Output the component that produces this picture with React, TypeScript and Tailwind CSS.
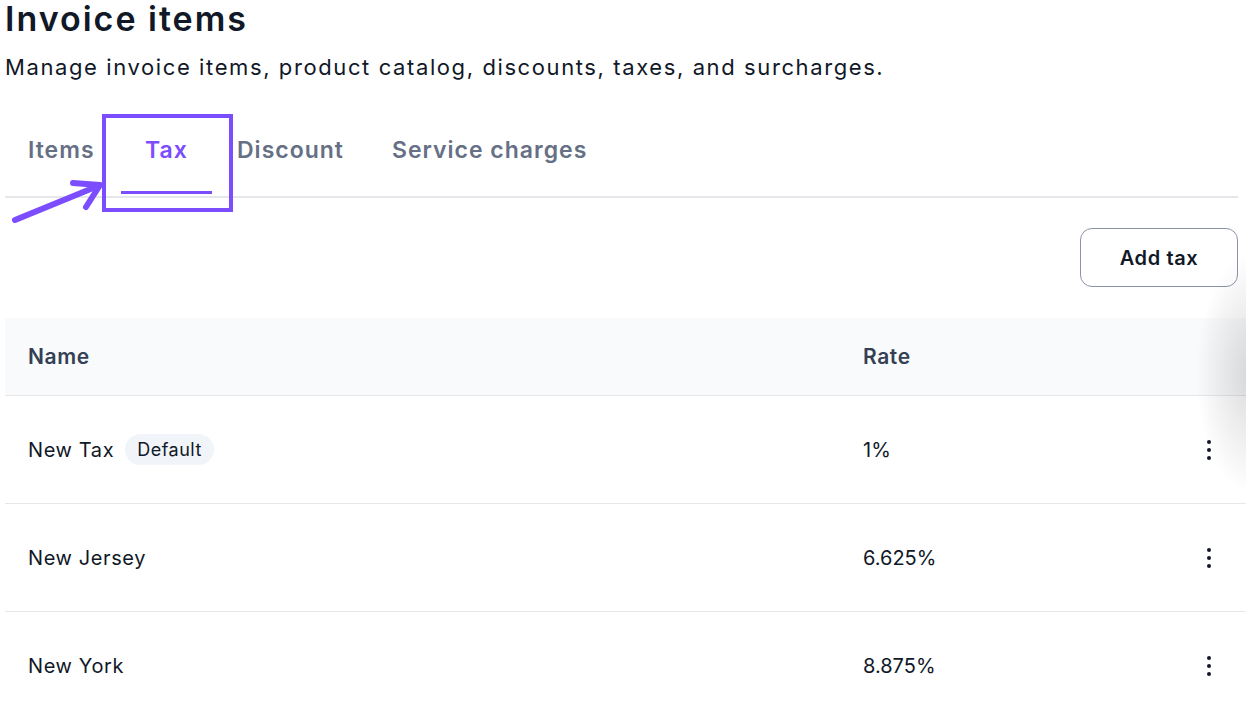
import React from 'react';

const rows = [
  { name: 'New Tax', rate: '1%', isDefault: true },
  { name: 'New Jersey', rate: '6.625%' },
  { name: 'New York', rate: '8.875%' },
];

function Dots() {
  return (
    <svg width="6" height="22" viewBox="0 0 6 22" className="text-gray-900">
      <circle cx="3" cy="3" r="2" fill="currentColor" />
      <circle cx="3" cy="11" r="2" fill="currentColor" />
      <circle cx="3" cy="19" r="2" fill="currentColor" />
    </svg>
  );
}

export default function App() {
  return (
    <div className="relative h-[707px] w-[1246px] overflow-hidden bg-white pl-[5px] pr-[8px] font-['Inter',sans-serif] text-[#1f2937]">
      {/* shadow from an overlay off to the right */}
      <div className="pointer-events-none absolute right-[-60px] top-[254px] h-[240px] w-[110px] rounded-full bg-[radial-gradient(closest-side,rgba(0,0,0,0.14),rgba(0,0,0,0))]" />

      <h1 className="mt-[-3px] text-[34px] font-semibold leading-[44px] tracking-[2px] text-[#111827]">Invoice items</h1>
      <p className="mt-[10px] text-[22px] leading-[32px] tracking-[1.6px] text-[#111827]">
        Manage invoice items, product catalog, discounts, taxes, and surcharges.
      </p>

      {/* tabs */}
      <div className="relative mt-[34px] flex h-[81px] border-b-2 border-[#e5e7eb]">
        <div className="flex items-start pt-[15px] text-[23px] font-semibold leading-[36px] tracking-[1px]">
          <span className="w-[116px] pl-[23px] text-[#667085]">Items</span>
          <span className="relative w-[91px] text-center text-[#7c4dff]">
            Tax
            <span className="absolute left-0 top-[59px] h-[3px] w-[91px] bg-[#7c4dff]" />
          </span>
          <span className="ml-[25px] w-[155px] text-[#667085]">Discount</span>
          <span className="text-[#667085]">Service charges</span>
        </div>
        {/* annotation */}
        <div className="pointer-events-none absolute left-[97px] top-[-3px] h-[98px] w-[131px] border-4 border-[#7c4dff]" />
        <svg className="pointer-events-none absolute left-[-5px] top-[52px]" width="110" height="56" viewBox="0 0 110 56">
          <path d="M15 51 L98 17" stroke="#7c4dff" strokeWidth="6" strokeLinecap="round" fill="none" />
          <path d="M73 14 L100 16 L86 38" stroke="#7c4dff" strokeWidth="6" strokeLinecap="round" strokeLinejoin="round" fill="none" />
        </svg>
      </div>

      <div className="mt-[30px] flex justify-end">
        <button className="h-[59px] w-[158px] rounded-[12px] border border-[#8b93a7] bg-white text-[20px] font-semibold tracking-[0.6px] text-[#111827]">
          Add tax
        </button>
      </div>

      {/* table */}
      <div className="mt-[31px] mr-[-8px]">
        <div className="flex h-[78px] items-center border-b border-[#e5e7eb] bg-[#f9fafb] text-[21px] font-semibold tracking-[0.6px] text-[#344054]">
          <span className="w-[858px] pl-[23px]">Name</span>
          <span>Rate</span>
        </div>
        {rows.map((r) => (
          <div key={r.name} className="flex h-[108px] items-center border-b border-[#e5e7eb] text-[20px] text-[#111827]">
            <div className="flex w-[858px] items-center gap-[11px] pl-[23px]">
              <span className="tracking-[0.6px]">{r.name}</span>
              {r.isDefault && (
                <span className="rounded-full bg-[#f1f5f9] px-[12px] py-[3px] text-[18px] leading-[25px] tracking-[0.5px]">Default</span>
              )}
            </div>
            <span className="flex-1">{r.rate}</span>
            <span className="mr-[34px]"><Dots /></span>
          </div>
        ))}
      </div>
    </div>
  );
}
